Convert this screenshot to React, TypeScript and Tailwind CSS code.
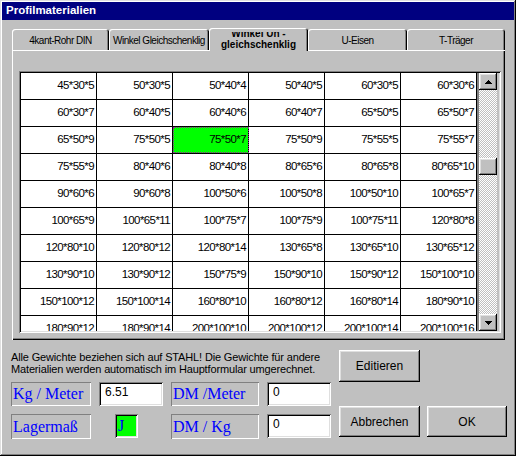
const rows = [
  ["45*30*5", "50*30*5", "50*40*4", "50*40*5", "60*30*5", "60*30*6"],
  ["60*30*7", "60*40*5", "60*40*6", "60*40*7", "65*50*5", "65*50*7"],
  ["65*50*9", "75*50*5", "75*50*7", "75*50*9", "75*55*5", "75*55*7"],
  ["75*55*9", "80*40*6", "80*40*8", "80*65*6", "80*65*8", "80*65*10"],
  ["90*60*6", "90*60*8", "100*50*6", "100*50*8", "100*50*10", "100*65*7"],
  ["100*65*9", "100*65*11", "100*75*7", "100*75*9", "100*75*11", "120*80*8"],
  ["120*80*10", "120*80*12", "120*80*14", "130*65*8", "130*65*10", "130*65*12"],
  ["130*90*10", "130*90*12", "150*75*9", "150*90*10", "150*90*12", "150*100*10"],
  ["150*100*12", "150*100*14", "160*80*10", "160*80*12", "160*80*14", "180*90*10"],
  ["180*90*12", "180*90*14", "200*100*10", "200*100*12", "200*100*14", "200*100*16"],
];

const raised =
  "shadow-[inset_-1px_-1px_#000,inset_1px_1px_#fff,inset_-2px_-2px_#808080,inset_2px_2px_#dfdfdf]";
const sunken =
  "shadow-[inset_1px_1px_#808080,inset_-1px_-1px_#fff,inset_2px_2px_#000,inset_-2px_-2px_#dfdfdf]";
const thin = "shadow-[inset_1px_1px_#808080,inset_-1px_-1px_#fff]";
const serif = "font-['Liberation_Serif','Times_New_Roman',serif] text-[16px] text-[#0000ff]";

function Tab({ label, width }: { label: string; width: string }) {
  return (
    <div
      className={`flex h-[21px] items-center justify-center rounded-t-[3px] pt-[2px] text-[10px] tracking-[-0.5px] whitespace-nowrap shadow-[inset_1px_1px_#fff,inset_-1px_0_#000,inset_-2px_0_#808080] ${width}`}
    >
      {label}
    </div>
  );
}

function Arrow({ down }: { down?: boolean }) {
  return (
    <div className={`flex h-[17px] items-center justify-center bg-[#c0c0c0] ${raised}`}>
      <svg width="7" height="4" viewBox="0 0 7 4" shapeRendering="crispEdges">
        <path d={down ? "M0 0H7L3.5 4z" : "M3.5 0L7 4H0z"} fill="#000" />
      </svg>
    </div>
  );
}

function Label({ text, width, tall }: { text: string; width: string; tall?: boolean }) {
  return (
    <div className={`flex items-center pl-[2px] ${tall ? "h-[25px]" : "h-[24px]"} ${width} ${thin} ${serif}`}>
      {text}
    </div>
  );
}

function Field({ value }: { value: string }) {
  return (
    <div className={`h-[24px] w-[64px] bg-white pl-[6px] pt-[3px] text-[12px] leading-[14px] ${sunken}`}>{value}</div>
  );
}

function Button({ text, width }: { text: string; width: string }) {
  return (
    <div className={`flex items-center justify-center text-[12px] ${width} ${raised}`}>{text}</div>
  );
}

export default function App() {
  return (
    <div className="min-h-screen bg-[#c0c0c0]">
      <div
        className={`h-[456px] w-[516px] bg-[#c0c0c0] p-[2px] font-['Liberation_Sans',Arial,sans-serif] text-black shadow-[inset_-1px_-1px_#000,inset_1px_1px_#dfdfdf,inset_-2px_-2px_#808080,inset_2px_2px_#fff]`}
      >
        <div className="flex h-[18px] items-center bg-[#000080] pl-[4px] text-[11.5px] font-bold text-white">
          Profilmaterialien
        </div>

        <div className="ml-[10px] mt-[8px] w-[493px]">
          <div className="flex h-[22px] items-end">
            <Tab label="4kant-Rohr DIN" width="w-[97px]" />
            <Tab label="Winkel Gleichschenklig" width="w-[100px]" />
            <div className="relative z-10 -mb-[1px] h-[23px] w-[99px] rounded-t-[3px] bg-[#c0c0c0] shadow-[inset_1px_1px_#fff,inset_-1px_0_#000,inset_-2px_0_#808080]">
              <div className="mt-[4px] h-[18px] overflow-hidden">
                <div className="flex h-[18px] flex-col items-center justify-end text-[10px] leading-[11px] font-bold whitespace-nowrap">
                  <span>Winkel Un -</span>
                  <span>gleichschenklig</span>
                </div>
              </div>
            </div>
            <Tab label="U-Eisen" width="w-[99px]" />
            <Tab label="T-Träger" width="w-[98px]" />
          </div>

          <div className="h-[290px] pl-[7px] pt-[21px] shadow-[inset_1px_1px_#fff,inset_-1px_-1px_#000,inset_-2px_-2px_#808080]">
            <div className={`flex h-[262px] w-[482px] p-[2px] ${sunken}`}>
              <div className="h-full w-[456px] overflow-hidden bg-white text-[11.5px] tracking-[-0.6px]">
                {rows.map((row, r) => (
                  <div key={r} className="flex h-[27px] shrink-0 border-b border-black">
                    {row.map((cell, c) => (
                      <div
                        key={cell}
                        className={`flex w-[76px] items-center justify-end border-r border-black pr-[2px] ${
                          r === 2 && c === 2
                            ? "bg-[#00ff00] outline-1 outline-dotted outline-[#a020a0] -outline-offset-1"
                            : ""
                        }`}
                      >
                        {cell}
                      </div>
                    ))}
                  </div>
                ))}
              </div>
              <div className="w-[2px] bg-[#808080]" />
              <div className="flex h-[258px] w-[18px] flex-col">
                <Arrow />
                <div className="flex-1 bg-[conic-gradient(#fff_25%,#c0c0c0_0_50%,#fff_0_75%,#c0c0c0_0)] bg-[length:2px_2px]">
                  <div className={`mt-[68px] h-[17px] bg-[#c0c0c0] ${raised}`} />
                </div>
                <Arrow down />
              </div>
            </div>
          </div>
        </div>

        <div className="ml-[9px] flex">
          <div className="w-[320px]">
            <p className="mt-[11px] text-[11px] leading-[12px] tracking-[-0.15px]">
              Alle Gewichte beziehen sich auf STAHL! Die Gewichte für andere
              <br />
              Materialien werden automatisch im Hauptformular umgerechnet.
            </p>
            <div className="mt-[7px] flex gap-[8px]">
              <Label text="Kg / Meter" width="w-[80px]" />
              <Field value="6.51" />
              <Label text="DM /Meter" width="w-[88px]" />
              <Field value="0" />
            </div>
            <div className="mt-[8px] flex items-start">
              <Label text="Lagermaß" width="w-[80px]" tall />
              <div className="w-[80px] pl-[24px]">
                <div className={`h-[24px] w-[23px] bg-[#00ff00] pl-[3px] leading-[24px] ${sunken} ${serif}`}>J</div>
              </div>
              <Label text="DM / Kg" width="w-[88px]" tall />
              <div className="ml-[8px]">
                <Field value="0" />
              </div>
            </div>
          </div>
          <div className="ml-[8px]">
            <div className="mt-[10px] flex h-[32px]">
              <Button text="Editieren" width="w-[81px]" />
            </div>
            <div className="mt-[24px] flex h-[31px] gap-[7px]">
              <Button text="Abbrechen" width="w-[81px]" />
              <Button text="OK" width="w-[80px]" />
            </div>
          </div>
        </div>
      </div>
    </div>
  );
}
